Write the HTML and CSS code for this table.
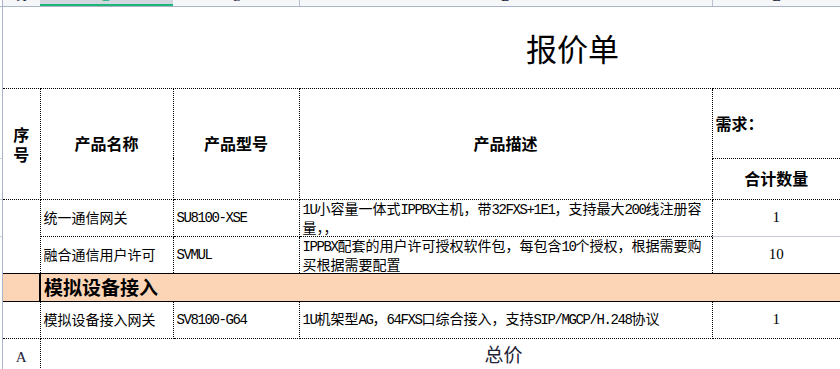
FILE: index.html
```html
<!DOCTYPE html>
<html lang="zh-CN">
<head>
<meta charset="utf-8">
<title>报价单</title>
<link rel="stylesheet" href="styles.css">
</head>
<body>
<div class="sheet">
  <div class="colbar">
    <div class="gut"></div>
    <div class="ch ch-a"><span>A</span></div>
    <div class="ch ch-b sel"><span>B</span></div>
    <div class="ch ch-c"><span>C</span></div>
    <div class="ch ch-d"><span>D</span></div>
    <div class="ch ch-e"><span>E</span></div>
  </div>
  <div class="body">
    <div class="rowgut"></div>
    <table class="grid">
      <colgroup>
        <col class="c-a"><col class="c-b"><col class="c-c"><col class="c-d"><col class="c-e">
      </colgroup>
      <tr class="r-title">
        <td colspan="5" class="title"><span>报价单</span></td>
      </tr>
      <tr class="r-h1">
        <td rowspan="2" class="hd seq col-a">序<br>号</td>
        <td rowspan="2" class="hd">产品名称</td>
        <td rowspan="2" class="hd">产品型号</td>
        <td rowspan="2" class="hd">产品描述</td>
        <td class="hd need col-e">需求：</td>
      </tr>
      <tr class="r-h2">
        <td class="hd col-e">合计数量</td>
      </tr>
      <tr class="r-d1">
        <td rowspan="2" class="col-a"></td>
        <td class="txt">统一通信网关</td>
        <td class="txt"><span class="en">SU8100-XSE</span></td>
        <td class="txt desc"><span class="en">1U</span>小容量一体式<span class="en">IPPBX</span>主机，带<span class="en">32FXS+1E1</span>，支持最大<span class="en">200</span>线注册容<br>量，，</td>
        <td class="qty col-e gray-b">1</td>
      </tr>
      <tr class="r-d2">
        <td class="txt">融合通信用户许可</td>
        <td class="txt"><span class="en">SVMUL</span></td>
        <td class="txt desc"><span class="en">IPPBX</span>配套的用户许可授权软件包，每包含<span class="en">10</span>个授权，根据需要购<br>买根据需要配置</td>
        <td class="qty col-e">10</td>
      </tr>
      <tr class="r-sec">
        <td class="sec col-a"></td>
        <td colspan="4" class="sec sec-t col-e">模拟设备接入</td>
      </tr>
      <tr class="r-d3">
        <td class="col-a"></td>
        <td class="txt">模拟设备接入网关</td>
        <td class="txt"><span class="en">SV8100-G64</span></td>
        <td class="txt"><span class="en">1U</span>机架型<span class="en">AG</span>，<span class="en">64FXS</span>口综合接入，支持<span class="en">SIP/MGCP/H.248</span>协议</td>
        <td class="qty col-e">1</td>
      </tr>
      <tr class="r-total">
        <td class="mark col-a">A</td>
        <td colspan="4" class="total col-e">总价</td>
      </tr>
    </table>
  </div>
</div>
</body>
</html>
```

FILE: styles.css
```css
html, body {
  margin: 0;
  padding: 0;
  background: #ffffff;
}

body {
  font-family: "Noto Sans CJK SC", sans-serif;
  font-size: 14px;
  color: #000;
  width: 840px;
  height: 369px;
  overflow: hidden;
}

.sheet {
  display: flex;
  flex-direction: column;
  width: 840px;
}

/* column header bar */
.colbar {
  display: flex;
  height: 6px;
  background: #f5f6f8;
  border-bottom: 1px solid #aab3c8;
  overflow: hidden;
}

.gut {
  width: 2px;
  border-right: 1px solid #aab3c8;
  background: #fff;
  flex: none;
}

.ch {
  flex: none;
  overflow: hidden;
  box-sizing: border-box;
  height: 6px;
}

.ch span {
  display: block;
  text-align: center;
  font-family: "Liberation Serif", serif;
  font-size: 14px;
  line-height: 14px;
  margin-top: -10px;
  color: #1a1a3a;
}

.ch-a { width: 37px; }
.ch-b { width: 133px; }
.ch-c { width: 127px; border-right: 1px solid #b8bfd0; }
.ch-d { width: 413px; border-right: 1px solid #b8bfd0; }
.ch-e { flex: 1; }

.sel {
  background: #d3d7df;
  border-bottom: 2px solid #1fb57a;
}

.sel span {
  color: #1fb57a;
}

/* body */
.body {
  display: flex;
  overflow: hidden;
}

.rowgut {
  width: 2px;
  flex: none;
  border-right: 1px solid #aab3c8;
  background:
    linear-gradient(#c9cedb, #c9cedb) 0 151px / 2px 1px no-repeat,
    linear-gradient(#c9cedb, #c9cedb) 0 192px / 2px 1px no-repeat,
    linear-gradient(#c9cedb, #c9cedb) 0 229px / 2px 1px no-repeat;
}

.grid {
  border-collapse: collapse;
  table-layout: fixed;
  width: 837px;
  flex: none;
}

.c-a { width: 37px; }
.c-b { width: 133px; }
.c-c { width: 126px; }
.c-d { width: 413px; }
.c-e { width: 128px; }

.grid td {
  border: 1px dotted #000;
  padding: 0 3px;
  vertical-align: middle;
  white-space: nowrap;
  overflow: hidden;
  line-height: 17px;
}

.grid td.col-a { border-left: none; }
.grid td.col-e { border-right: none; }

.r-title { height: 81px; }
.r-h1 { height: 70px; }
.r-h2 { height: 41px; }
.r-d1 { height: 37px; }
.r-d2 { height: 35px; }
.r-sec { height: 28px; }
.r-d3 { height: 37px; }
.r-total { height: 31px; }

.grid td.title {
  border-top: none;
  border-left: none;
  border-right: none;
  padding: 0 0 0 523px;
  font-size: 31px;
  line-height: 36px;
  vertical-align: middle;
}

.title span {
  display: inline-block;
  padding-top: 2px;
}

.hd {
  font-weight: 700;
  font-size: 16px;
  text-align: center;
}

.grid td.seq {
  padding: 0;
  line-height: 20px;
  white-space: normal;
}

.grid td.need {
  text-align: left;
  padding-left: 3px;
}

.txt {
  text-align: left;
}

.en {
  font-family: "Liberation Mono", monospace;
  letter-spacing: -1.4px;
}

.qty {
  text-align: center;
  font-family: "Liberation Serif", serif;
  font-size: 15px;
}

.grid td.gray-b {
  border-bottom: 1px solid #c5cad6;
}

.grid td.sec {
  background: #fbd5b5;
  border-top: 1px solid #000;
  border-bottom: 1px solid #000;
}

.grid td.sec-t {
  border-left: 2px solid #000;
  font-weight: 700;
  font-size: 19px;
  line-height: 22px;
  padding-left: 3px;
}

.grid td.mark {
  text-align: center;
  vertical-align: bottom;
  font-family: "Liberation Serif", serif;
  font-size: 15px;
  color: #1a1a3a;
  padding-bottom: 3px;
}

.grid td.total {
  padding-left: 444px;
  font-size: 19px;
  line-height: 22px;
  color: #222236;
}
```
